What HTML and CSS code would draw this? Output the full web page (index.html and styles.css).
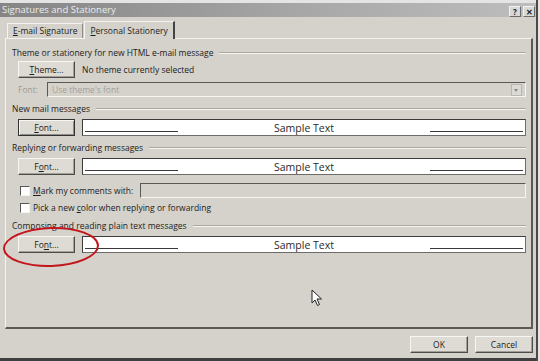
FILE: index.html
```html
<!DOCTYPE html>
<html lang="en">
<head>
    <meta charset="UTF-8">
    <meta name="viewport" content="width=device-width, initial-scale=1.0">
    <title>Signatures and Stationery</title>
    <link rel="stylesheet" href="styles.css">
</head>
<body>
    <div class="window">
        <div class="strip"></div>
        <div class="titlebar">
            <span class="title">Signatures and Stationery</span>
            <div class="title-buttons">
                <span class="tbtn">?</span>
                <span class="tbtn">✕</span>
            </div>
        </div>

        <div class="content">
            <div class="tabs">
                <div class="tab"><u>E</u>-mail Signature</div>
                <div class="tab active"><u>P</u>ersonal Stationery</div>
            </div>

            <div class="panel">
                <!-- Theme -->
                <div class="group-title">Theme or stationery for new HTML e-mail message</div>
                <div class="row theme-row">
                    <button class="btn"><u>T</u>heme...</button>
                    <span class="theme-name">No theme currently selected</span>
                </div>
                <div class="row font-select-row">
                    <span class="muted-label">Font:</span>
                    <div class="select">
                        <span>Use theme's font</span>
                        <span class="arrow"></span>
                    </div>
                </div>

                <!-- New mail -->
                <div class="group-title">New mail messages</div>
                <div class="row font-row">
                    <button class="btn default"><u>F</u>ont...</button>
                    <div class="sample">
                        <span class="rule"></span>
                        <span class="sample-text">Sample Text</span>
                        <span class="rule"></span>
                    </div>
                </div>

                <!-- Reply -->
                <div class="group-title">Replying or forwarding messages</div>
                <div class="row font-row">
                    <button class="btn">F<u>o</u>nt...</button>
                    <div class="sample">
                        <span class="rule"></span>
                        <span class="sample-text">Sample Text</span>
                        <span class="rule"></span>
                    </div>
                </div>
                <div class="row check-row mark-row">
                    <span class="check"></span>
                    <span class="check-label"><u>M</u>ark my comments with:</span>
                    <div class="text-field"></div>
                </div>
                <div class="row check-row pick-row">
                    <span class="check"></span>
                    <span class="check-label">Pick a new <u>c</u>olor when replying or forwarding</span>
                </div>

                <!-- Plain text -->
                <div class="group-title">Composing and reading plain text messages</div>
                <div class="row font-row">
                    <button class="btn">Fo<u>n</u>t...</button>
                    <div class="sample">
                        <span class="rule"></span>
                        <span class="sample-text">Sample Text</span>
                        <span class="rule"></span>
                    </div>
                </div>
            </div>

            <div class="footer">
                <button class="btn footer-btn">OK</button>
                <button class="btn footer-btn">Cancel</button>
            </div>
        </div>
        <div class="bottom-edge"></div>

        <!-- hand drawn marker and pointer over the screenshot -->
        <div class="marker"></div>
        <svg class="cursor" width="12" height="18" viewBox="0 0 12 18">
            <path d="M1 1 L1 14 L4 11 L6.5 16.5 L8.5 15.5 L6 10 L10.5 10 Z" fill="#fff" stroke="#222" stroke-width="1"/>
        </svg>
    </div>
</body>
</html>
```

FILE: styles.css
```css
body {
    margin: 0;
    padding: 0;
    background-color: #e6e4e0;
    font-family: "Open Sans", "Noto Sans", sans-serif;
    font-size: 8.5px;
    color: #1c1c1c;
}
.window {
    position: relative;
    width: 536px;
    height: 361px;
    background-color: #d5d2cb;
    border-right: 2px solid #4a4a4a;
    display: flex;
    flex-direction: column;
    overflow: hidden;
}
.strip {
    height: 3px;
    background-color: #e4e4e4;
}
.titlebar {
    height: 14px;
    display: flex;
    align-items: center;
    justify-content: space-between;
    background: linear-gradient(to right, #858585, #a9a9a9 60%, #bdbdbd);
    padding: 0 1px 0 2px;
}
.title {
    color: #ececec;
    font-size: 9.5px;
    line-height: 14px;
}
.title-buttons {
    display: flex;
    gap: 2px;
    margin-top: 3px;
}
.tbtn {
    width: 10px;
    height: 9px;
    font-size: 8px;
    line-height: 9px;
    text-align: center;
    font-weight: bold;
    color: #222;
    background-color: #d8d8d8;
    border: 1px solid #6a6a6a;
    border-top-color: #f2f2f2;
    border-left-color: #f2f2f2;
}
.content {
    padding: 3px 0 0 5px;
}
.tabs {
    height: 18px;
    display: flex;
    align-items: flex-end;
    padding-left: 2px;
}
.tab {
    height: 14px;
    line-height: 14px;
    padding: 0 5px;
    border: 1px solid #f4f3f0;
    border-bottom: none;
    border-right: 1px solid #8d8b86;
    margin-right: 1px;
}
.tab.active {
    height: 17px;
    line-height: 18px;
    border-right: 2px solid #444;
    position: relative;
    top: 1px;
    background-color: #d5d2cb;
}
.panel {
    height: 280px;
    width: 514px;
    border: 1px solid #f4f3f0;
    border-right: 2px solid #5b5a57;
    border-bottom: 2px solid #5b5a57;
    padding: 8px 5px 0 6px;
    display: flex;
    flex-direction: column;
}
.group-title {
    display: flex;
    align-items: center;
    line-height: 12px;
    height: 12px;
    margin-top: 6px;
}
.group-title:first-child {
    margin-top: 0;
}
.group-title::after {
    content: "";
    flex: 1;
    margin-left: 6px;
    border-top: 1px solid #a9a7a1;
    border-bottom: 1px solid #f6f5f2;
}
.row {
    display: flex;
    align-items: center;
    padding-left: 6px;
}
.theme-row {
    margin-top: 2px;
    height: 17px;
}
.theme-name {
    margin-left: 7px;
}
.font-select-row {
    margin-top: 4px;
    height: 15px;
}
.muted-label {
    color: #9c9a95;
    width: 29px;
}
.select {
    flex: 1;
    height: 13px;
    display: flex;
    align-items: center;
    justify-content: space-between;
    color: #a3a19c;
    padding-left: 4px;
    border: 1px solid #f6f5f2;
    border-top: 1px solid #5a5955;
    border-left: 1px solid #5a5955;
}
.arrow {
    width: 9px;
    height: 10px;
    margin-right: 3px;
    background-color: #dcdad4;
    border: 1px solid #b9b7b2;
    position: relative;
}
.arrow::after {
    content: "";
    position: absolute;
    left: 2px;
    top: 4px;
    border-left: 2.5px solid transparent;
    border-right: 2.5px solid transparent;
    border-top: 3px solid #8a8883;
}
.btn {
    width: 57px;
    height: 17px;
    padding: 0;
    font-family: inherit;
    font-size: 8.5px;
    color: #1c1c1c;
    background-color: #dedbd4;
    border: 1px solid #f7f6f3;
    border-right-color: #4d4c49;
    border-bottom-color: #4d4c49;
    box-shadow: inset -1px -1px 0 #a19f99;
}
.btn.default {
    border: 1px solid #333;
    box-shadow: inset 1px 1px 0 #f7f6f3, inset -1px -1px 0 #8f8d88;
}
.font-row {
    margin-top: 4px;
    height: 17px;
}
.sample {
    flex: 1;
    height: 15px;
    margin-left: 7px;
    background-color: #fff;
    border: 1px solid #3d3c3a;
    border-right-color: #6d6c69;
    border-bottom-color: #6d6c69;
    display: flex;
    justify-content: space-between;
    align-items: center;
    padding: 0 2px;
}
.rule {
    width: 93px;
    align-self: flex-end;
    margin-bottom: 3px;
    border-bottom: 1px solid #3a3a3a;
}
.sample-text {
    font-size: 10.5px;
    color: #2a2a2a;
}
.check-row {
    padding-left: 8px;
}
.check {
    width: 8px;
    height: 8px;
    background-color: #fff;
    border: 1px solid #f5f4f1;
    border-top-color: #575653;
    border-left-color: #575653;
}
.check-label {
    margin-left: 3px;
}
.mark-row {
    margin-top: 8px;
    height: 15px;
}
.text-field {
    flex: 1;
    height: 13px;
    margin-left: 7px;
    border: 1px solid #f6f5f2;
    border-top: 1px solid #5a5955;
    border-left: 1px solid #5a5955;
}
.pick-row {
    margin-top: 3px;
    height: 13px;
}
.footer {
    display: flex;
    justify-content: flex-end;
    gap: 7px;
    padding: 7px 3px 0 0;
}
.footer-btn {
    width: 58px;
}
.bottom-edge {
    margin-top: auto;
    height: 3px;
    background-color: #3f3f3f;
}
.marker {
    position: absolute;
    left: 3px;
    top: 227px;
    width: 92px;
    height: 36px;
    border: 2.5px solid #c4141c;
    border-radius: 50%;
    transform: rotate(-2deg);
}
.cursor {
    position: absolute;
    left: 311px;
    top: 289px;
}
```
